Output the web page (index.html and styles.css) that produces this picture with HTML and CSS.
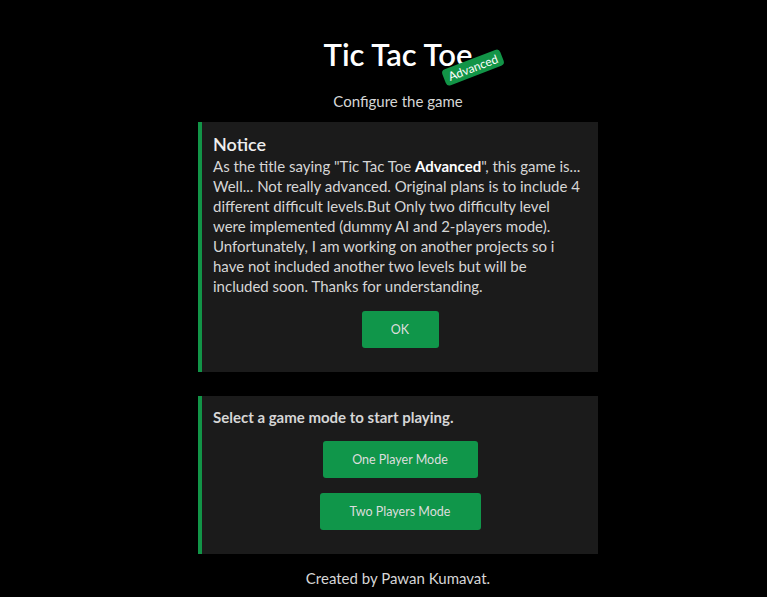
FILE: index.html
```html
<!DOCTYPE html>
<html>
<head>
<meta charset="utf-8">
<link rel="stylesheet" href="styles.css">
</head>
<body>
<div class="page">
  <header class="head">
    <h1 class="title">Tic Tac Toe<span class="badge">Advanced</span></h1>
    <p class="sub">Configure the game</p>
  </header>
  <section class="card notice">
    <h2 class="card-title">Notice</h2>
    <p class="text">As the title saying "Tic Tac Toe <b>Advanced</b>", this game is...<br>Well... Not really advanced. Original plans is to include 4<br>different difficult levels.But Only two difficulty level<br>were implemented (dummy AI and 2-players mode).<br>Unfortunately, I am working on another projects so i<br>have not included another two levels but will be<br>included soon. Thanks for understanding.</p>
    <div class="actions"><button class="btn ok">OK</button></div>
  </section>
  <section class="card modes">
    <p class="lead">Select a game mode to start playing.</p>
    <div class="stack">
      <button class="btn one">One Player Mode</button>
      <button class="btn two">Two Players Mode</button>
    </div>
  </section>
  <footer class="foot">Created by Pawan Kumavat.</footer>
</div>
</body>
</html>
```
FILE: styles.css
```css
html, body { margin: 0; background: #000; }
body { font-family: Lato, "Noto Sans", sans-serif; color: #d6d6d6; }
.page { padding-left: 29px; display: flex; flex-direction: column; align-items: center; }
.head { text-align: center; padding-top: 35px; }
.title { position: relative; margin: 0; font-size: 31px; font-weight: 600; color: #fff; line-height: 38px; }
.badge { position: absolute; left: 118px; top: 24px; background: #129447; color: #fff; font-size: 12px; font-weight: 400; line-height: 17px; padding: 0 5px; border-radius: 4px; transform: rotate(-21deg); }
.sub { margin: 18px 0 0; font-size: 15px; line-height: 20px; }
.card { border-left: 4px solid #129447; background: #1b1b1b; box-sizing: content-box; }
.notice { margin-top: 11px; padding: 10px 11px 24px 11px; width: 374px; }
.card-title { margin: 0; font-size: 18px; font-weight: 600; color: #eee; line-height: 24px; }
.text { margin: 0; font-size: 15px; line-height: 20px; white-space: nowrap; }
.text b { font-weight: 700; color: #fff; }
.actions { display: flex; justify-content: center; margin-top: 15px; }
.btn { background: #10964a; color: #ddd; border: 0; border-radius: 3px; font-family: inherit; font-size: 12.5px; height: 37px; padding: 0; }
.ok { width: 77px; }
.modes { margin-top: 24px; padding: 11px 11px 24px 11px; width: 374px; }
.lead { margin: 0; font-size: 15px; font-weight: 700; line-height: 20px; }
.stack { display: flex; flex-direction: column; align-items: center; gap: 15px; margin-top: 14px; }
.one { width: 155px; }
.two { width: 161px; }
.foot { margin-top: 14px; font-size: 15px; line-height: 20px; }
```
